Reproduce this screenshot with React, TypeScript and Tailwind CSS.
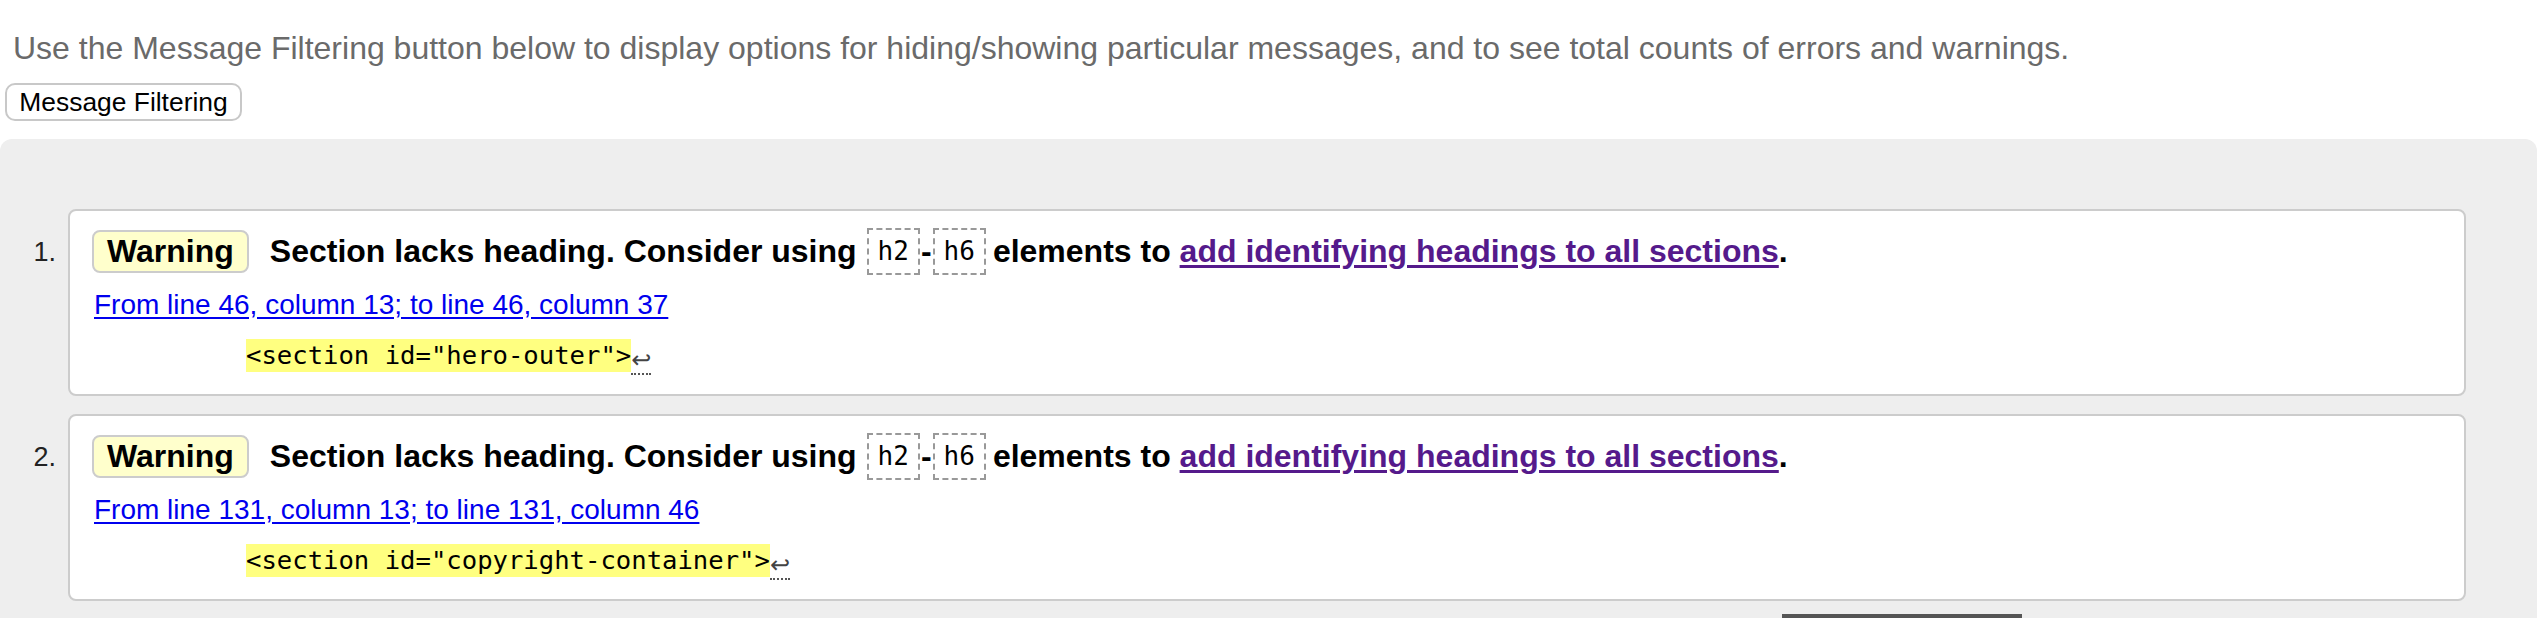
import React from "react";

type Msg = {
  from: string;
  code: string;
};

const messages: Msg[] = [
  { from: "From line 46, column 13; to line 46, column 37", code: '<section id="hero-outer">' },
  { from: "From line 131, column 13; to line 131, column 46", code: '<section id="copyright-container">' },
];

function Tag({ children }: { children: React.ReactNode }) {
  return (
    <code className="inline-flex items-center h-[47px] px-[9px] border-2 border-dashed border-[#999] font-['DejaVu_Sans_Mono',monospace] text-[26px] font-normal">
      {children}
    </code>
  );
}

export default function App() {
  return (
    <div className="min-h-[618px] flex flex-col bg-white font-['Liberation_Sans',Arial,sans-serif] text-black">
      {/* intro */}
      <p className="pt-[29px] pl-[13px] text-[32px] leading-[38px] text-[#6a6a6a]">
        Use the Message Filtering button below to display options for hiding/showing particular messages, and to see total counts of errors and warnings.
      </p>
      <div className="pt-[16px] pl-[5px]">
        <button className="w-[237px] h-[38px] flex items-center justify-center border-2 border-[#c8c8c8] rounded-[10px] bg-white text-[26.4px] leading-none">
          Message Filtering
        </button>
      </div>

      {/* results */}
      <div className="flex-1 mt-[18px] bg-[#eeeeee] rounded-t-[12px] pt-[70px] pr-[71px]">
        <ol className="flex flex-col gap-[18px]">
          {messages.map((m, i) => (
            <li key={i} className="flex">
              <span className="w-[68px] shrink-0 pt-[28px] pr-[12px] text-right text-[27px] leading-[30px] text-[#222]">
                {i + 1}.
              </span>
              <div className="flex-1 bg-white border-2 border-[#cccccc] rounded-[8px] pl-[22px] pt-[17px] pb-[22px]">
                {/* message line */}
                <p className="flex items-center flex-wrap text-[32px] font-bold leading-[47px]">
                  <span className="h-[43px] flex items-center px-[13px] bg-[#ffffcc] border-2 border-[#cccccc] rounded-[8px]">
                    Warning
                  </span>
                  <span className="ml-[21px] mr-[10px]">Section lacks heading. Consider using</span>
                  <Tag>h2</Tag>
                  <span className="mx-[1px]">-</span>
                  <Tag>h6</Tag>
                  <span className="ml-[7px]">elements to&nbsp;</span>
                  <a href="#" className="text-[#551a8b] underline underline-offset-[3px]">
                    add identifying headings to all sections
                  </a>
                  <span>.</span>
                </p>

                {/* location */}
                <p className="mt-[14px] pl-[2px] text-[28px] leading-[32px]">
                  <a href="#" className="text-[#0000ee] underline underline-offset-[3px]">
                    {m.from}
                  </a>
                </p>

                {/* extract */}
                <p className="mt-[18px] pl-[154px] flex items-end">
                  <code className="bg-[#ffff80] h-[33px] flex items-center font-['DejaVu_Sans_Mono',monospace] text-[25.6px] whitespace-pre">
                    {m.code}
                  </code>
                  <span className="border-b-2 border-dotted border-[#555] text-[24px] leading-[26px] font-['DejaVu_Sans',sans-serif] text-[#444] translate-y-[3px]">
                    ↩
                  </span>
                </p>
              </div>
            </li>
          ))}
        </ol>
        <div className="mt-[13px] ml-[1782px] w-[240px] h-[6px] bg-[#555555]" />
      </div>
    </div>
  );
}
